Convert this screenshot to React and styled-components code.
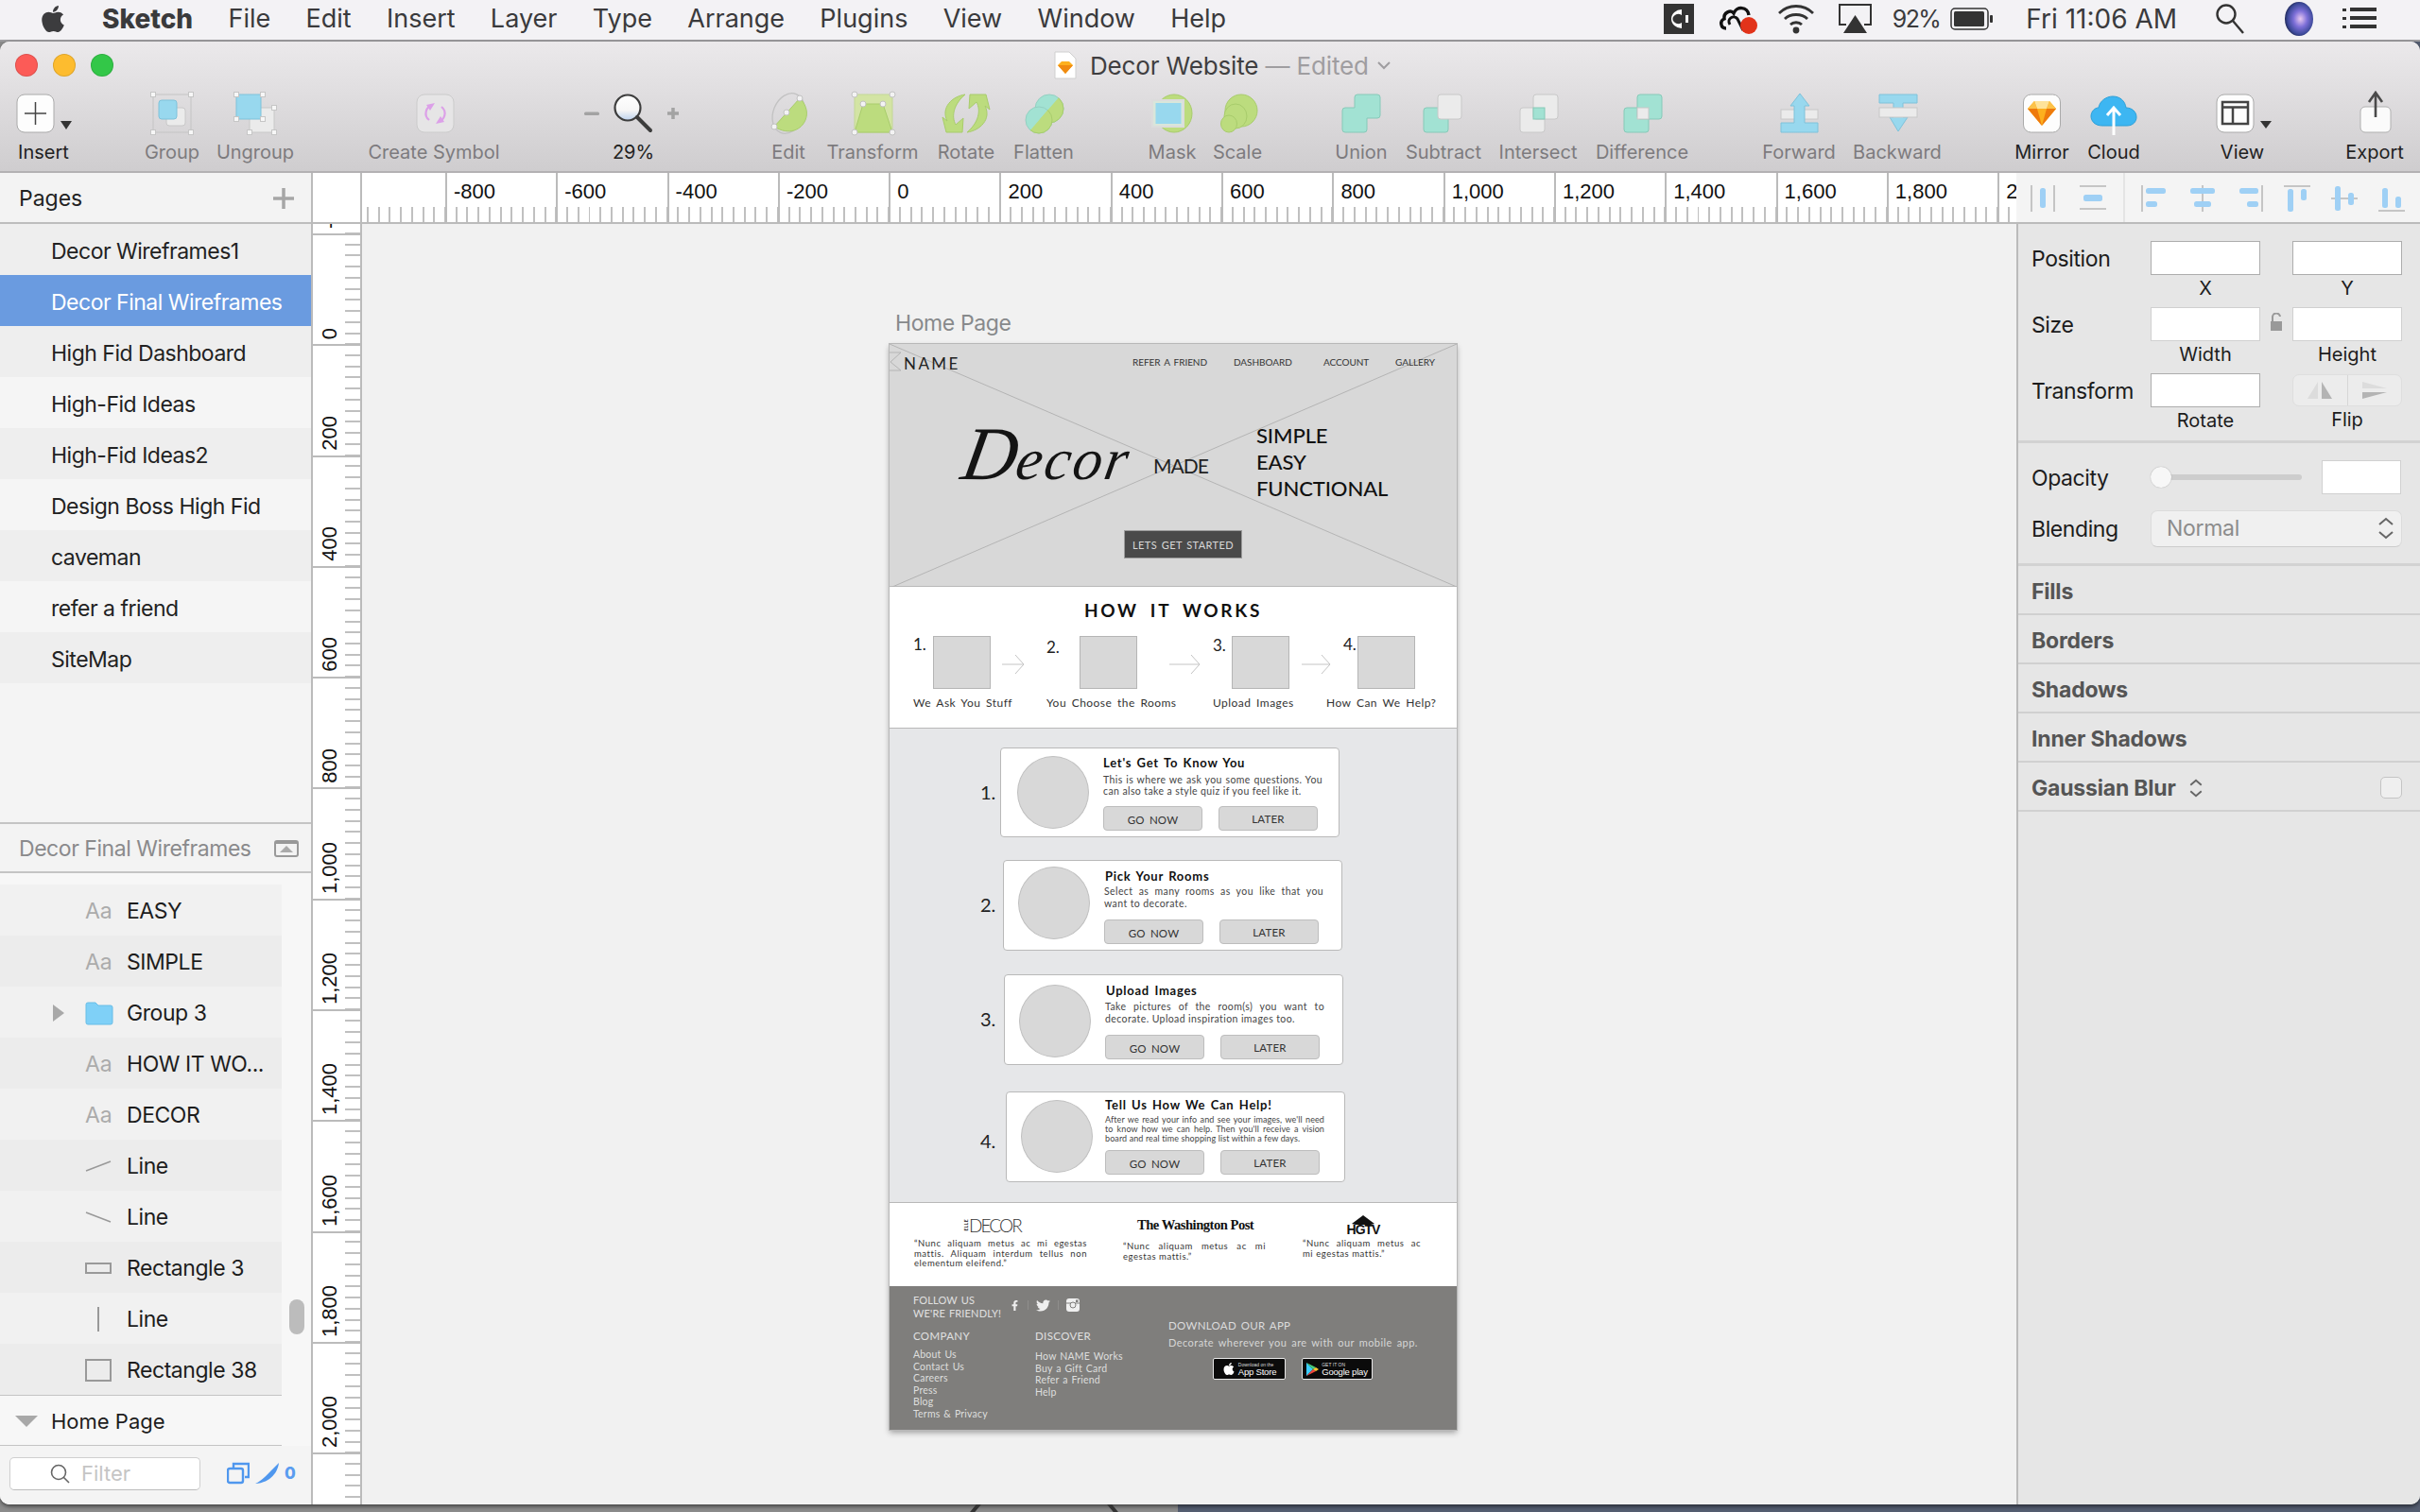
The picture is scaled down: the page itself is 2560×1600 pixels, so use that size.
import React from 'react';
import styled, { createGlobalStyle } from 'styled-components';
import { FaApple, FaFacebookF, FaTwitter } from 'react-icons/fa';

const UI = `"Inter", "Liberation Sans", sans-serif`;
const WIRE = `"Lato", "Noto Sans", sans-serif`;

const Global = createGlobalStyle`
  html, body { margin: 0; width: 2560px; height: 1600px; overflow: hidden; background: #8c8c8c; }
  #root { width: 2560px; height: 1600px; }
  * { box-sizing: border-box; }
`;

const Screen = styled.div`
  width: 2560px; height: 1600px; display: flex; flex-direction: column;
  font-family: ${UI}; background: linear-gradient(90deg, #8b8b8b 0, #8b8b8b 1246px, #545d70 1246px, #545d70 100%);
`;

/* ---------- menu bar ---------- */
const MenuBar = styled.header`
  height: 44px; flex: none; display: flex; align-items: center; background: #f3f2f5;
  border-bottom: 2px solid #9d9c9f; padding: 0 46px 2px 42px; color: #3a3a3c;
`;
const AppleMark = styled(FaApple)` width: 28px; height: 32px; color: #3c3c3e; margin-right: 38px; `;
const MenuItems = styled.nav` display: flex; gap: 37.3px; font-size: 27px; `;
const MenuItem = styled.span` font-weight: ${p => (p.$bold ? 800 : 400)}; font-size: ${p => (p.$bold ? 28 : 27)}px; `;
const Status = styled.div` margin-left: auto; display: flex; align-items: center; `;
const StatusText = styled.span` font-size: ${p => p.$fs || 26}px; color: #3a3a3c; margin-left: ${p => p.$ml || 0}px; letter-spacing: ${p => p.$ls || 0}px; white-space: nowrap; `;
const StatusIcon = styled.svg` margin-left: ${p => p.$ml || 0}px; display: block; flex: none; `;

/* ---------- window ---------- */
const Window = styled.main`
  height: 1548px; flex: none; display: flex; flex-direction: column;
  border-radius: 10px; overflow: hidden; background: #f1f1f1;
  box-shadow: 0 2px 4px rgba(0,0,0,.55);
`;
const Chrome = styled.div`
  height: 139px; flex: none; display: flex; flex-direction: column;
  background: linear-gradient(#ebe9eb, #cfcdcf); border-bottom: 2px solid #b3b1b3;
`;
const TitleBar = styled.div` height: 52px; flex: none; display: flex; align-items: center; padding: 0 0 2px 16px; `;
const Lights = styled.div` display: flex; gap: 16px; width: 1099px; `;
const Light = styled.span` width: 24px; height: 24px; border-radius: 50%; background: ${p => p.$c}; box-shadow: inset 0 0 0 1px rgba(0,0,0,.12); `;
const DocIcon = styled.svg` margin-right: 14px; flex: none; `;
const DocTitle = styled.span` font-size: 26px; color: #3f3e40; letter-spacing: -0.15px; `;
const DocMuted = styled.span` color: #9f9da0; `;
const TitleChevron = styled.svg` margin-left: 8px; `;

const Tools = styled.div` display: flex; flex: 1; align-items: flex-start; `;
const Tool = styled.div`
  flex: none; width: ${p => p.$w}px; margin-left: ${p => p.$ml || 0}px;
  display: flex; flex-direction: column; align-items: center;
`;
const ToolIcon = styled.svg` flex: none; width: 130px; height: 48px; display: block; margin-top: 0; `;
const ToolLabel = styled.span`
  font-size: 20px; line-height: 24px; margin-top: 5px; white-space: nowrap;
  color: ${p => (p.$on ? '#222' : '#7d7b7e')};
`;

const Body = styled.div`
  flex: 1; min-height: 0; display: grid;
  grid-template-columns: 329px 54px 1750px 427px;
  grid-template-rows: 54px 1fr;
`;

/* ---------- left pane ---------- */
const LeftPane = styled.aside` grid-row: 1 / 3; display: flex; flex-direction: column; background: #f4f4f4; min-height: 0; `;
const Pages = styled.section` height: 687px; flex: none; display: flex; flex-direction: column; `;
const PagesHead = styled.div`
  height: 54px; flex: none; display: flex; align-items: center; justify-content: space-between;
  padding: 2px 17px 0 20px; font-size: 23px; color: #222; border-bottom: 2px solid #bdbdbd; background: #f3f3f3;
`;
const PlusIcon = styled.svg` display: block; `;
const PageRow = styled.div`
  height: 54px; flex: none; display: flex; align-items: center; padding: 4px 0 0 54px; font-size: 23px; letter-spacing: -0.5px;
  color: ${p => (p.$sel ? '#fff' : '#222')};
  background: ${p => (p.$sel ? '#6a9be0' : p.$alt ? '#eeeeee' : '#f5f5f5')};
`;
const LayersHead = styled.div`
  height: 54px; flex: none; display: flex; align-items: center; justify-content: space-between;
  padding: 2px 13px 0 20px; font-size: 23px; color: #8a8a8c; letter-spacing: -0.45px;
  border-top: 2px solid #c4c4c4; border-bottom: 2px solid #c4c4c4; background: #f3f3f3;
`;
const Layers = styled.div` height: 606px; flex: none; display: flex; background: #f7f7f7; `;
const LayerCol = styled.div` width: 298px; flex: none; padding-top: 12px; display: flex; flex-direction: column; `;
const LayerRow = styled.div`
  height: 54px; flex: none; display: grid; grid-template-columns: 56px 34px 44px 1fr; align-items: center; padding-top: 2px;
  font-size: 23px; color: #1d1d1d; letter-spacing: -0.45px; white-space: nowrap;
  background: ${p => (p.$alt ? '#ececec' : '#f1f1f1')};
`;
const Aa = styled.span` color: #ababab; font-size: 23px; letter-spacing: 0; `;
const HomeRow = styled.div`
  height: 54px; flex: none; display: flex; align-items: center; padding: 2px 0 0 16px; gap: 14px; font-size: 22px;
  color: #1d1d1d; border-top: 1px solid #c4c4c4; border-bottom: 1px solid #c4c4c4; background: #f7f7f7;
`;
const ScrollThumb = styled.div` width: 16px; height: 37px; border-radius: 8px; background: #bcbcbc; margin: 451px 0 0 8px; `;
const FilterBar = styled.div` flex: 1; display: flex; align-items: center; padding: 0 0 4px 10px; background: #f4f4f4; `;
const FilterBox = styled.div`
  width: 202px; height: 35px; border: 1px solid #cfcfcf; border-bottom-color: #bdbdbd; border-radius: 5px; background: #fff;
  display: flex; align-items: center; padding-left: 42px; gap: 12px; font-size: 22px; color: #c5c5c5;
`;
const CountIcon = styled.svg` margin-left: 28px; flex: none; `;
const PenIcon = styled.svg` margin-left: 6px; flex: none; `;
const Count = styled.span` font-size: 17px; font-weight: 800; color: #5a9cf0; margin-left: 5px; `;

/* ---------- rulers ---------- */
const Corner = styled.div` background: #fff; border-left: 2px solid #bbb; border-right: 2px solid #bbb; border-bottom: 2px solid #bbb; `;
const HRuler = styled.div`
  display: flex; overflow: hidden; border-bottom: 2px solid #bbb;
  background: repeating-linear-gradient(90deg, transparent 0, transparent 4.9px, #c0c0c0 4.9px, #c0c0c0 6.9px, transparent 6.9px, transparent 11.73px) left bottom / 100% 16px no-repeat, #fff;
`;
const HSpacer = styled.div` width: 88px; flex: none; `;
const HCell = styled.div`
  width: 117.3px; flex: none; border-left: 2px solid #bbb; padding-left: 7px;
  font: 22px/40px "Liberation Sans", sans-serif; color: #111;
`;
const VRuler = styled.div`
  display: flex; flex-direction: column; overflow: hidden; border-left: 2px solid #bbb; border-right: 2px solid #bbb;
  background: repeating-linear-gradient(180deg, transparent 0, transparent 9px, #c0c0c0 9px, #c0c0c0 11px, transparent 11px, transparent 11.73px) right top / 16px 100% no-repeat, #fff;
`;
const VCell = styled.div`
  height: ${p => p.$h}px; flex: none; border-bottom: 2px solid #bbb; display: flex; align-items: flex-end;
  justify-content: flex-start; padding: 0 0 5px 5px; overflow: hidden;
`;
const VLabel = styled.span`
  writing-mode: vertical-rl; transform: rotate(180deg); font: 22px/26px "Liberation Sans", sans-serif; color: #111; white-space: nowrap; flex: none;
`;

/* ---------- align bar + inspector ---------- */
const AlignBar = styled.div`
  display: flex; align-items: center; padding-left: 8px; background: #f4f4f4; border-bottom: 2px solid #bbb; position: relative;
`;
const AlignIcon = styled.svg` width: 40px; height: 40px; flex: none; margin-left: ${p => p.$ml || 0}px; `;
const AlignDivider = styled.span` position: absolute; left: 113px; top: 0; bottom: 0; width: 2px; background: #e4e4e4; `;
const Inspector = styled.aside` background: #e6e6e6; border-left: 2px solid #bbb; display: flex; flex-direction: column; `;
const FormBlock = styled.div` padding: 18px 19px 0 14px; height: 232px; flex: none; border-bottom: 3px solid #d2d2d2; `;
const FormRow = styled.div` display: grid; grid-template-columns: 126px 116px 34px 116px; height: 70px; `;
const RowLabel = styled.span` font-size: 23px; line-height: 38px; color: #1c1c1c; letter-spacing: -0.4px; `;
const Field = styled.div` display: flex; flex-direction: column; align-items: center; font-size: 20px; color: #1c1c1c; line-height: 28px; `;
const InputBox = styled.div`
  width: ${p => p.$w || 116}px; height: 36px; flex: none; background: #fff;
  border: 1px solid ${p => (p.$soft ? '#d0d0d0' : '#adadad')}; border-bottom-width: 1px;
`;
const LockCell = styled.div` display: flex; justify-content: center; padding-top: 6px; `;
const Flip = styled.div` width: 116px; height: 34px; margin-top: 1px; display: flex; border-radius: 7px; background: #ececec; border: 1px solid #dedede; `;
const FlipSide = styled.div` flex: 1; display: flex; align-items: center; justify-content: center; border-left: ${p => (p.$div ? '1px solid #d6d6d6' : 'none')}; `;
const BlendBlock = styled.div` padding: 18px 19px 0 14px; height: 130px; flex: none; border-bottom: 3px solid #d2d2d2; `;
const BlendRow = styled.div` display: flex; align-items: center; height: 36px; margin-bottom: ${p => p.$mb || 0}px; `;
const BlendLabel = styled.span` width: 126px; flex: none; font-size: 23px; color: #1c1c1c; letter-spacing: -0.4px; padding-top: 2px; `;
const Slider = styled.div` width: 160px; height: 6px; border-radius: 3px; background: #cdcdcd; position: relative; flex: none; margin-right: 21px; `;
const Thumb = styled.span` position: absolute; left: 0; top: -8px; width: 22px; height: 22px; border-radius: 50%; background: #f7f7f7; box-shadow: 0 0 1px rgba(0,0,0,.4); `;
const Select = styled.div`
  width: 266px; height: 39px; border-radius: 7px; background: #f0f0f0; border: 1px solid #dcdcdc; border-bottom-color: #ccc;
  display: flex; align-items: center; justify-content: space-between; padding: 0 5px 0 16px; font-size: 23px; color: #8c8c8c; letter-spacing: -0.3px;
`;
const SectionRow = styled.div`
  height: 52px; flex: none; display: flex; align-items: center; padding: 3px 19px 0 14px;
  font-size: 23px; font-weight: 700; color: #555; border-bottom: 2px solid #d0d0d0; letter-spacing: -0.2px;
`;
const Check = styled.span` margin-left: auto; width: 23px; height: 23px; border: 1px solid #c4c4c4; border-radius: 5px; background: #efefef; `;
const SmallChevrons = styled.svg` margin-left: 12px; `;

/* ---------- canvas + artboard ---------- */
const Canvas = styled.div` background: #f1f1f1; padding: 91px 0 0 558px; overflow: hidden; `;
const ArtLabel = styled.div` font-size: 23px; line-height: 28px; color: #87898b; margin: 0 0 8px 6px; letter-spacing: -0.4px; `;
const Artboard = styled.article`
  width: 600px; height: 1149px; display: flex; flex-direction: column; background: #fff;
  box-shadow: 0 0 0 1px #b8b8b8, 0 3px 6px rgba(0,0,0,.35); font-family: ${WIRE}; color: #111;
`;
const Hero = styled.section` height: 257px; flex: none; background: #d8d8d8; position: relative; border-bottom: 1px solid #b8b8b8; `;
const HeroX = styled.svg` position: absolute; inset: 0; width: 600px; height: 257px; `;
const HeroIn = styled.div` position: relative; display: flex; flex-direction: column; `;
const Nav = styled.div`
  display: grid; grid-template-columns: 242px 107px 95px 76px auto; align-items: center;
  padding: 9px 0 0 15px; height: 32px; font-size: 10px; color: #333; letter-spacing: -.05px; word-spacing: 1.5px;
`;
const NavLink = styled.span` margin-top: -4px; white-space: nowrap; `;
const Brand = styled.span` font-size: 17px; letter-spacing: 2.4px; color: #222; `;
const HeroMid = styled.div` display: grid; grid-template-columns: 207px 109px auto; padding: 51px 0 0 72px; height: 165px; `;
const Decor = styled.div`
  font: italic 400 80px/84px "Liberation Serif", serif; color: #141414; margin: -9px 0 0 -8px;
  transform: skewX(-10deg); transform-origin: left bottom; white-space: nowrap;
`;
const DecorRest = styled.span` font-size: 62px; letter-spacing: 2.5px; `;
const Made = styled.div` font-size: 21px; line-height: 28px; padding-top: 32px; letter-spacing: -1px; color: #222; `;
const Words = styled.div` font-size: 22px; line-height: 28px; font-weight: 500; letter-spacing: -.1px; color: #111; `;
const Started = styled.div`
  width: 125px; height: 30px; margin: 0 0 0 248px; background: #4a4a4a; border: 1px solid #9b9b9b; white-space: nowrap;
  display: flex; align-items: center; justify-content: center; color: #d8d8d8; font-size: 11px; letter-spacing: .4px; word-spacing: 1.5px;
`;
const How = styled.section` height: 149px; flex: none; padding-top: 14px; `;
const HowTitle = styled.h2`
  margin: 0; font: 700 19px/22px ${WIRE}; letter-spacing: 2.7px; word-spacing: 5px; text-align: center;
`;
const StepGrid = styled.div` display: grid; grid-template-columns: 141px 176px 120px auto; padding: 16px 0 0 25px; `;
const Step = styled.div` display: flex; flex-direction: column; `;
const StepTop = styled.div` display: flex; align-items: flex-start; height: 56px; `;
const StepNum = styled.span`
  width: ${p => p.$w}px; margin-left: ${p => p.$ml || 0}px; flex: none; padding-top: ${p => p.$pt}px;
  font-size: 17px; line-height: 18px; color: #222;
`;
const StepBox = styled.div` width: 61px; height: 56px; flex: none; background: #d8d8d8; border: 1px solid #b5b5b5; `;
const StepArrow = styled.svg` margin: 18px 0 0 ${p => p.$ml}px; flex: none; `;
const StepLabel = styled.span` margin-top: 8px; font-size: 12px; line-height: 14px; letter-spacing: .45px; word-spacing: 2.2px; color: #333; white-space: nowrap; `;

const Steps = styled.section` height: 503px; flex: none; background: #e6e7e9; border-top: 1px solid #b8b8b8; border-bottom: 1px solid #b8b8b8; padding-top: 20px; display: flex; flex-direction: column; `;
const CardRow = styled.div` display: flex; align-items: center; padding-left: 96px; margin-top: ${p => p.$mt || 0}px; `;
const CardNum = styled.span`
  width: ${p => p.$w}px; flex: none; font-size: 20px; line-height: 24px; color: #222; padding: ${p => p.$pt || 0}px 0 2px;
`;
const Card = styled.div`
  width: 359px; height: ${p => p.$h}px; flex: none; background: #fff; border: 1px solid #b9b9b9; border-radius: 4px;
  display: flex; align-items: flex-start;
`;
const Circle = styled.div`
  width: 76px; height: 77px; flex: none; border-radius: 50%; background: #d8d8d8; border: 1px solid #c0c0c0;
  margin: ${p => p.$top}px 0 0 ${p => p.$left}px;
`;
const CardBody = styled.div` margin-left: ${p => p.$left}px; padding-top: ${p => p.$pt}px; width: 234px; flex: none; display: flex; flex-direction: column; `;
const CardTitle = styled.h3` margin: 0 0 0 ${p => p.$ml || 0}px; font: 700 13px/16px ${WIRE}; letter-spacing: .75px; word-spacing: 1.5px; color: #111; `;
const CardText = styled.p`
  margin: ${p => p.$mt}px 0 0 0; font-size: ${p => p.$fs}px; line-height: ${p => p.$lh}px; color: #444; letter-spacing: ${p => p.$ls}px; text-align: justify; width: 232px;
`;
const CardBtns = styled.div` display: flex; gap: 17px; margin-top: ${p => p.$mt}px; `;
const CardBtn = styled.span`
  width: 105px; height: 26px; border: 1px solid #bdbdbd; border-radius: 4px; background: #d8d8d8; display: flex; align-items: center; justify-content: center;
  padding-top: ${p => (p.$low ? 2 : 0)}px; font-size: 11.5px; letter-spacing: .2px; word-spacing: 2px; color: #333;
`;

const Press = styled.section` height: 88px; flex: none; display: grid; grid-template-columns: 221px 190px auto; padding: 11px 0 0 26px; `;
const Quote = styled.div` display: flex; flex-direction: column; `;
const LogoSlot = styled.div` height: 24px; display: flex; align-items: center; margin-left: ${p => p.$ml}px; `;
const Elle = styled.span` font-size: 5px; font-weight: 900; writing-mode: vertical-rl; transform: rotate(180deg); letter-spacing: .4px; color: #444; `;
const ElleDecor = styled.span` font-weight: 300; font-size: 19px; letter-spacing: -1.9px; color: #333; `;
const WaPo = styled.span` font: 700 14.6px "Liberation Serif", serif; letter-spacing: -.5px; color: #111; white-space: nowrap; `;
const HgtvWrap = styled.div` display: flex; flex-direction: column; align-items: center; width: 36px; `;
const Hgtv = styled.span` font: 700 14px/11px "Liberation Sans", sans-serif; letter-spacing: -1px; color: #111; `;
const QuoteText = styled.p`
  margin: ${p => p.$mt}px 0 0 0; width: ${p => p.$w}px; font-size: 9.5px; line-height: ${p => p.$lh}px; letter-spacing: .55px; color: #333; text-align: justify;
`;

const Footer = styled.footer` flex: 1; background: #7f7e7c; display: grid; grid-template-columns: 270px auto; padding: 8px 0 0 25px; color: #dcdcdc; `;
const Follow = styled.div` display: flex; `;
const FollowText = styled.div` width: 102px; flex: none; font-size: 11px; line-height: 14px; letter-spacing: .15px; word-spacing: 1px; white-space: nowrap; color: #e0e0e0; `;
const Socials = styled.div` display: flex; align-items: center; height: 14px; margin-top: 5px; color: #efefef; gap: 8px; `;
const SocialSep = styled.span` width: 1px; height: 10px; background: #8f8e8c; `;
const LinkCols = styled.div` display: grid; grid-template-columns: 129px auto; margin-top: 10px; `;
const ColHead = styled.div` font-size: 11.5px; line-height: 14px; letter-spacing: .35px; color: #e0e0e0; `;
const LinkList = styled.div` margin-top: ${p => p.$mt}px; display: flex; flex-direction: column; font-size: 10.5px; line-height: 12.6px; letter-spacing: .2px; word-spacing: 1px; color: #dedede; white-space: nowrap; `;
const AppCol = styled.div` padding-top: 27px; `;
const AppHead = styled.div` font-size: 11.5px; line-height: 14px; letter-spacing: .3px; word-spacing: 1.5px; color: #dcdcdc; `;
const AppText = styled.div` font-size: 11px; line-height: 14px; margin-top: 4px; letter-spacing: .45px; word-spacing: 1.6px; color: #d6d6d6; white-space: nowrap; `;
const Badges = styled.div` display: flex; gap: 17px; margin: 9px 0 0 47px; `;
const Badge = styled.div`
  width: ${p => p.$w}px; height: 23px; background: #0b0b0b; border: 1px solid #e8e8e8; border-radius: 2px; display: flex; align-items: center; justify-content: center; gap: 3px; color: #fff;
`;
const BadgeText = styled.div` display: flex; flex-direction: column; font: 5px/6px "Liberation Sans", sans-serif; color: #ddd; white-space: nowrap; `;
const BadgeBig = styled.span` font-size: 9.5px; line-height: 9px; color: #fff; letter-spacing: -.2px; `;
const AppleBadge = styled(FaApple)` width: 14px; height: 15px; `;

const Strip = styled.div` flex: 1; overflow: hidden; `;
const StripArt = styled.svg` display: block; margin-left: 1000px; `;

/* ---------- icons ---------- */
const GR = '#bcdc7e', GRS = '#a8cc6c', BL = '#98d8ee', BLS = '#7fc2da', TL = '#a2e2d3', TLS = '#86c9b8', WH = '#ebebeb', WHS = '#c8c8c8';
const Sq = ({ x, y }) => <rect x={x - 2.5} y={y - 2.5} width="5" height="5" fill="#f7f7f7" stroke="#c6c6c6" />;
const Dot = ({ x, y }) => <circle cx={x} cy={y} r="3" fill="#f3f3f3" stroke="#c2c2c2" />;
const Gem = () => (
  <g>
    <polygon points="-8,11 8,11 15,19 0,37 -15,19" fill="#fdb01e" />
    <polygon points="-8,11 8,11 5,19 -5,19" fill="#fee39a" />
    <polygon points="-8,11 -15,19 -5,19" fill="#fcc24a" />
    <polygon points="8,11 15,19 5,19" fill="#fcc24a" />
    <polygon points="-15,19 -5,19 0,37" fill="#ee7a0c" />
    <polygon points="15,19 5,19 0,37" fill="#ee7a0c" />
  </g>
);
const ROT = 'M-1 4C-15 6 -27 18 -20 32L-25 28L-21 44L-4 44L-3 29L-11 36C-16 27 -13 14 -1 4Z';

const icons = {
  insert: <>
    <rect x="-28" y="4" width="39" height="40" rx="8" fill="#fdfdfd" stroke="#aaa" />
    <path d="M-8.5 12V36M-20 24H3" stroke="#444" strokeWidth="1.5" />
    <polygon points="18,32 30,32 24,41" fill="#333" />
  </>,
  group: <>
    <rect x="-20" y="4" width="40" height="40" fill="none" stroke="#c4c4c4" />
    <rect x="-6" y="18" width="20" height="19" rx="3" fill={WH} stroke={WHS} />
    <rect x="-14" y="10" width="19" height="20" rx="3" fill={BL} stroke={BLS} />
    <Sq x={-20} y={4} /><Sq x={20} y={4} /><Sq x={-20} y={44} /><Sq x={20} y={44} />
  </>,
  ungroup: <>
    <rect x="-6" y="18" width="26" height="26" fill={WH} stroke={WHS} />
    <rect x="-20" y="4" width="26" height="26" fill={BL} stroke={BLS} />
    <Sq x={-20} y={4} /><Sq x={8} y={4} /><Sq x={-20} y={30} /><Sq x={8} y={30} />
    <Sq x={20} y={18} /><Sq x={-6} y={44} /><Sq x={20} y={44} />
  </>,
  symbol: <>
    <rect x="-18" y="4" width="39" height="40" rx="8" fill="#e6e5e6" stroke="#cbcbcb" />
    <path d="M-5 31A9 9 0 0 1 -1 15" fill="none" stroke="#dca0e8" strokeWidth="2.2" />
    <path d="M8 17A9 9 0 0 1 4 33" fill="none" stroke="#dca0e8" strokeWidth="2.2" />
    <polygon points="-8,15 1,13 -4,21" fill="#dca0e8" />
    <polygon points="11,33 2,35 7,27" fill="#dca0e8" />
  </>,
  zoom: <>
    <rect x="-52" y="22.5" width="16" height="3.5" rx="1.5" fill="#a3a3a3" />
    <path d="M36 24H48M42 18V30" stroke="#a3a3a3" strokeWidth="3.5" />
    <defs><linearGradient id="lens" x1="0" y1="0" x2="0" y2="1"><stop offset="0" stopColor="#fff" /><stop offset=".6" stopColor="#f6f6f6" /><stop offset="1" stopColor="#bcd1ee" /></linearGradient></defs>
    <circle cx="-6" cy="18" r="13.5" fill="url(#lens)" stroke="#3d3d3d" strokeWidth="2.2" />
    <path d="M4 28L18 42" stroke="#3d3d3d" strokeWidth="4" strokeLinecap="round" />
  </>,
  edit: <>
    <ellipse cx="0" cy="24" rx="16" ry="22" transform="rotate(22 0 24)" fill="none" stroke="#c2c2c2" strokeWidth="1.3" />
    <path d="M-15 38L12 8C17 12 22 22 18 31C14 41 1 48 -15 38Z" fill={GR} stroke={GRS} />
    <Dot x={-15} y={38} /><Dot x={-2} y={23} /><Dot x={12} y={8} />
  </>,
  transform: <>
    <rect x="-19" y="4" width="40" height="40" fill="#d3e4a4" stroke="#c3d796" />
    <polygon points="-10,14 11,14 21,44 -19,44" fill={GR} stroke={GRS} />
    <Dot x={-19} y={4} /><Dot x={21} y={4} /><Dot x={-19} y={44} /><Dot x={21} y={44} /><Dot x={-10} y={14} /><Dot x={11} y={14} />
  </>,
  rotate: <>
    <path d={ROT} fill={GR} stroke={GRS} />
    <path d={ROT} transform="rotate(180 0 24)" fill={GR} stroke={GRS} />
  </>,
  flatten: <>
    <defs><clipPath id="flatClip"><polygon points="-30,52 -16,44 17,6 30,6 30,52" /></clipPath></defs>
    <circle cx="6" cy="19" r="15" fill={TL} stroke="#94d0c2" />
    <circle cx="-5" cy="31" r="14" fill={TL} stroke="#94d0c2" />
    <g clipPath="url(#flatClip)">
      <circle cx="6" cy="19" r="15" fill={GR} stroke={GRS} />
      <circle cx="-5" cy="31" r="14" fill={GR} stroke={GRS} />
    </g>
  </>,
  mask: <>
    <ellipse cx="2" cy="24" rx="19" ry="20" fill={GR} stroke={GRS} />
    <rect x="-21" y="10" width="33" height="28" fill="#d9e6da" stroke="#dcdcdc" strokeWidth="2" />
    <rect x="-17.5" y="13" width="27" height="22" fill={BL} />
  </>,
  scale: <>
    <circle cx="4" cy="21" r="17" fill={GR} stroke={GRS} />
    <ellipse cx="-2" cy="27" rx="12" ry="13" fill={GR} stroke={GRS} />
    <ellipse cx="-9" cy="35" rx="8.5" ry="9" fill={GR} stroke={GRS} />
  </>,
  union: <path d="M-4 4H17Q20 4 20 7V26Q20 29 17 29H6V41Q6 44 3 44H-17Q-20 44 -20 41V21Q-20 18 -17 18H-7V7Q-7 4 -4 4Z" fill={TL} stroke={TLS} />,
  subtract: <>
    <rect x="-21" y="18" width="26" height="26" rx="3" fill={TL} stroke={TLS} />
    <rect x="-6" y="4" width="25" height="26" rx="3" fill={WH} stroke={WHS} />
  </>,
  intersect: <>
    <rect x="-19" y="18" width="26" height="26" rx="3" fill={WH} stroke={WHS} />
    <rect x="-5" y="4" width="26" height="26" rx="3" fill={WH} stroke={WHS} />
    <rect x="-5" y="18" width="12" height="12" fill={TL} stroke={TLS} />
  </>,
  difference: <>
    <rect x="-19" y="18" width="26" height="26" rx="3" fill={TL} stroke={TLS} />
    <rect x="-5" y="4" width="26" height="26" rx="3" fill={TL} stroke={TLS} />
    <rect x="-5" y="18" width="12" height="12" fill={WH} stroke={WHS} />
  </>,
  forward: <>
    <rect x="-19" y="20" width="39" height="10" fill={WH} stroke={WHS} />
    <polygon points="1,3 11,16 6,16 6,34 20,34 20,44 -19,44 -19,34 -5,34 -5,16 -9,16" fill={BL} stroke={BLS} />
  </>,
  backward: <>
    <polygon points="-19,4 21,4 21,13 6,13 6,28 11,28 1,43 -8,28 -4,28 -4,13 -19,13" fill={BL} stroke={BLS} />
    <rect x="-19" y="18" width="40" height="10" fill={WH} stroke={WHS} />
  </>,
  mirror: <>
    <rect x="-19.5" y="4" width="39" height="40" rx="8" fill="#fdfdfd" stroke="#aaa" />
    <Gem />
  </>,
  cloud: <>
    <path d="M-12 37C-20 37 -24 32 -24 27C-24 22 -20 18 -16 18C-15 11 -8 6 -1 6C7 6 12 11 13 18C19 18 24 22 24 28C24 33 20 37 14 37Z" fill="#3db6f2" stroke="#2b9fd8" />
    <path d="M0 47V19M-7 26L0 18L7 26" fill="none" stroke="#fff" strokeWidth="3" />
  </>,
  view: <>
    <rect x="-27" y="4" width="39" height="40" rx="8" fill="#fdfdfd" stroke="#aaa" />
    <rect x="-21" y="12" width="27" height="23" fill="none" stroke="#444" strokeWidth="2.5" />
    <path d="M-21 17.5H6M-10 17.5V35" stroke="#444" strokeWidth="2.5" />
    <polygon points="19,32 31,32 25,40" fill="#333" />
  </>,
  export: <>
    <rect x="-15" y="17" width="32" height="27" rx="5" fill="#fbfbfb" stroke="#b0b0b0" />
    <path d="M1 28V3M-6 12L1 2L8 12" fill="none" stroke="#4a4a4a" strokeWidth="2.6" />
  </>,
};

const tools = [
  ['insert', 'Insert', 92, 0, 1], ['group', 'Group', 80, 50], ['ungroup', 'Ungroup', 96, 0],
  ['symbol', 'Create Symbol', 160, 61], ['zoom', '29%', 140, 61, 1],
  ['edit', 'Edit', 60, 64], ['transform', 'Transform', 118, 0], ['rotate', 'Rotate', 80, 0], ['flatten', 'Flatten', 84, 0],
  ['mask', 'Mask', 66, 61], ['scale', 'Scale', 72, 0],
  ['union', 'Union', 76, 57], ['subtract', 'Subtract', 98, 0], ['intersect', 'Intersect', 102, 0], ['difference', 'Difference', 118, 0],
  ['forward', 'Forward', 94, 60], ['backward', 'Backward', 114, 0],
  ['mirror', 'Mirror', 76, 58, 1], ['cloud', 'Cloud', 76, 0, 1], ['view', 'View', 80, 58, 1], ['export', 'Export', 80, 60, 1],
];

const B = '#9fd0f5', G = '#b6b6b6';
const Pill = ({ x, y, w, h }) => <rect x={x} y={y} width={w} height={h} rx="2.5" fill={B} />;
const aligns = [
  [0, <><path d="M8 7V35M32 7V35" stroke={G} strokeWidth="1.5" /><Pill x={17} y={10} w={6} h={21} /></>],
  [13, <><path d="M6 8H34M6 32H34" stroke={G} strokeWidth="1.5" /><Pill x={10} y={17} w={20} h={7} /></>],
  [25, <><path d="M7 7V35" stroke={G} strokeWidth="1.5" /><Pill x={11} y={10} w={21} h={6} /><Pill x={11} y={24} w={12} h={6} /></>],
  [11, <><path d="M20 7V35" stroke={G} strokeWidth="1.5" /><Pill x={7} y={10} w={26} h={6} /><Pill x={11} y={24} w={18} h={6} /></>],
  [12, <><path d="M31 7V35" stroke={G} strokeWidth="1.5" /><Pill x={7} y={10} w={20} h={6} /><Pill x={15} y={24} w={12} h={6} /></>],
  [8, <><path d="M6 8H34" stroke={G} strokeWidth="1.5" /><Pill x={10} y={11} w={6} h={24} /><Pill x={24} y={11} w={6} h={12} /></>],
  [10, <><path d="M6 21H34" stroke={G} strokeWidth="1.5" /><Pill x={10} y={8} w={6} h={26} /><Pill x={24} y={15} w={6} h={13} /></>],
  [10, <><path d="M6 34H34" stroke={G} strokeWidth="1.5" /><Pill x={10} y={10} w={6} h={21} /><Pill x={24} y={19} w={6} h={12} /></>],
];

const Chevrons = ({ w = 22, h = 26 }) => (
  <svg width={w} height={h} viewBox="0 0 22 26" fill="none" stroke="#666" strokeWidth="2"><path d="M4 9L11 3L18 9M4 17L11 23L18 17" /></svg>
);

const pages = ['Decor Wireframes1', 'Decor Final Wireframes', 'High Fid Dashboard', 'High-Fid Ideas', 'High-Fid Ideas2', 'Design Boss High Fid', 'caveman', 'refer a friend', 'SiteMap'];

const LI = {
  aa: <Aa>Aa</Aa>,
  folder: <svg width="30" height="26" viewBox="0 0 30 26"><path d="M1 4Q1 2 3 2H11L14 5H27Q29 5 29 7V23Q29 25 27 25H3Q1 25 1 23Z" fill="#7fd0f7" stroke="#69bde6" /></svg>,
  up: <svg width="28" height="14" viewBox="0 0 28 14"><path d="M1 12L27 2" stroke="#999" strokeWidth="1.5" /></svg>,
  down: <svg width="28" height="14" viewBox="0 0 28 14"><path d="M1 2L27 12" stroke="#999" strokeWidth="1.5" /></svg>,
  rect: <svg width="28" height="14" viewBox="0 0 28 14"><rect x="1" y="2" width="26" height="10" fill="none" stroke="#999" strokeWidth="2" /></svg>,
  vline: <svg width="28" height="26" viewBox="0 0 28 26"><path d="M14 0V26" stroke="#999" strokeWidth="2" /></svg>,
  rect2: <svg width="28" height="24" viewBox="0 0 28 24"><rect x="1" y="1" width="26" height="22" fill="none" stroke="#999" strokeWidth="2" /></svg>,
};
const layers = [
  ['aa', 'EASY'], ['aa', 'SIMPLE'], ['folder', 'Group 3', 1], ['aa', 'HOW IT WO...'], ['aa', 'DECOR'],
  ['up', 'Line'], ['down', 'Line'], ['rect', 'Rectangle 3'], ['vline', 'Line'], ['rect2', 'Rectangle 38'],
];

const hLabels = ['-800', '-600', '-400', '-200', '0', '200', '400', '600', '800', '1,000', '1,200', '1,400', '1,600', '1,800', '2,000'];
const vLabels = ['0', '200', '400', '600', '800', '1,000', '1,200', '1,400', '1,600', '1,800', '2,000'];

const stepData = [
  { n: '1.', num: { w: 21, pt: 0 }, gap: 12, aw: 24, label: 'We Ask You Stuff' },
  { n: '2.', num: { w: 35, pt: 3 }, gap: 34, aw: 33, label: 'You Choose the Rooms' },
  { n: '3.', num: { w: 20, pt: 1 }, gap: 13, aw: 31, label: 'Upload Images' },
  { n: '4.', num: { w: 15, pt: 0, ml: 18 }, label: 'How Can We Help?' },
];

const cards = [
  { n: '1.', w: 21, mt: 0, np: 0, h: 95, cl: 17, ct: 8, bl: 15, pt: 7, tml: 0, ls: .4,
    title: "Let's Get To Know You", text: 'This is where we ask you some questions. You can also take a style quiz if you feel like it.', fs: 10.5, lh: 12, tm: 4, bm: 10 },
  { n: '2.', w: 24, mt: 24, np: 0, h: 96, cl: 15, ct: 6, bl: 15, pt: 8, tml: 1, ls: .4,
    title: 'Pick Your Rooms', text: 'Select as many rooms as you like that you want to decorate.', fs: 10.5, lh: 13, tm: 2, bm: 10 },
  { n: '3.', w: 25, mt: 25, np: 0, h: 96, cl: 15, ct: 10, bl: 15, pt: 8, tml: 1, ls: .4,
    title: 'Upload Images', text: 'Take pictures of the room(s) you want to decorate. Upload inspiration images too.', fs: 10.5, lh: 13, tm: 3, bm: 10 },
  { n: '4.', w: 27, mt: 28, np: 10, h: 96, cl: 15, ct: 8, bl: 13, pt: 5, tml: 0, ls: .1,
    title: 'Tell Us How We Can Help!', text: "After we read your info and see your images, we'll need to know how we can help. Then you'll receive a vision board and real time shopping list within a few days.", fs: 9, lh: 10, tm: 3, bm: 7 },
];

export default function App() {
  return (
    <Screen>
      <Global />
      <MenuBar>
        <AppleMark />
        <MenuItems>
          <MenuItem $bold>Sketch</MenuItem>
          {['File', 'Edit', 'Insert', 'Layer', 'Type', 'Arrange', 'Plugins', 'View', 'Window', 'Help'].map(m => <MenuItem key={m}>{m}</MenuItem>)}
        </MenuItems>
        <Status>
          <StatusIcon width="32" height="32" viewBox="0 0 32 32"><rect width="32" height="32" fill="#333" /><path d="M19 6A11 10 0 1 0 19 26V20A6 5 0 1 1 19 12Z" fill="#fff" /><path d="M23 12H26V20H23Z" fill="#fff" /></StatusIcon>
          <StatusIcon $ml={26} width="42" height="36" viewBox="0 0 42 36">
            <path d="M8 28C2 28 1 20 6 18C5 11 13 8 16 12C19 4 31 5 32 14" fill="none" stroke="#111" strokeWidth="3.5" />
            <path d="M12 24C8 18 16 13 20 18L26 30" fill="none" stroke="#111" strokeWidth="3" />
            <circle cx="32" cy="25" r="9" fill="#e2331a" />
          </StatusIcon>
          <StatusIcon $ml={20} width="40" height="34" viewBox="0 0 40 34" fill="none" stroke="#333" strokeWidth="2.8">
            <path d="M2 11C12 1 28 1 38 11M8 17C14 11 26 11 32 17M14 23C17 20 23 20 26 23" /><circle cx="20" cy="29" r="2" fill="#333" />
          </StatusIcon>
          <StatusIcon $ml={25} width="35" height="32" viewBox="0 0 35 32">
            <path d="M8 22H1V1H34V22H27" fill="none" stroke="#333" strokeWidth="2" /><polygon points="17.5,12 30,31 5,31" fill="#333" />
          </StatusIcon>
          <StatusText $ml={22} $fs={25} $ls={-1.6}>92%</StatusText>
          <StatusIcon $ml={11} width="45" height="24" viewBox="0 0 45 24">
            <rect x="1" y="1" width="39" height="22" rx="4" fill="none" stroke="#333" strokeWidth="1.5" /><rect x="4" y="4" width="32" height="16" rx="1.5" fill="#333" /><rect x="42" y="8" width="3" height="8" rx="1" fill="#333" />
          </StatusIcon>
          <StatusText $ml={35} $fs={28}>Fri 11:06 AM</StatusText>
          <StatusIcon $ml={41} width="30" height="32" viewBox="0 0 30 32" fill="none" stroke="#333" strokeWidth="2.4"><circle cx="11" cy="11" r="9.5" /><path d="M18 18L29 31" /></StatusIcon>
          <StatusIcon $ml={42} width="32" height="36" viewBox="0 0 32 36">
            <defs><radialGradient id="siri" cx=".55" cy=".5" r=".6"><stop offset="0" stopColor="#e8c8f0" /><stop offset=".4" stopColor="#7d6fd8" /><stop offset=".75" stopColor="#3d4a9a" /><stop offset="1" stopColor="#151a3c" /></radialGradient></defs>
            <ellipse cx="16" cy="18" rx="15" ry="18" fill="url(#siri)" />
          </StatusIcon>
          <StatusIcon $ml={30} width="36" height="24" viewBox="0 0 36 24" fill="#333">
            <rect x="0" y="1" width="4" height="3" /><rect x="8" y="0" width="28" height="4" /><rect x="0" y="10" width="4" height="3" /><rect x="8" y="9" width="28" height="4" /><rect x="0" y="19" width="4" height="3" /><rect x="8" y="18" width="28" height="4" />
          </StatusIcon>
        </Status>
      </MenuBar>

      <Window>
        <Chrome>
          <TitleBar>
            <Lights>
              <Light $c="#fc5b57" /><Light $c="#fdbc2f" /><Light $c="#33c748" />
            </Lights>
            <DocIcon width="24" height="30" viewBox="0 0 24 30">
              <path d="M1 1H16L23 8V29H1Z" fill="#fff" stroke="#cfcfcf" />
              <polygon points="8,11 16,11 20,15 12,24 4,15" fill="#fdb01e" />
              <polygon points="4,15 20,15 12,24" fill="#f08a10" />
            </DocIcon>
            <DocTitle>Decor Website <DocMuted>— Edited</DocMuted></DocTitle>
            <TitleChevron width="16" height="10" viewBox="0 0 16 10" fill="none" stroke="#9f9da0" strokeWidth="2"><path d="M2 2L8 8L14 2" /></TitleChevron>
          </TitleBar>
          <Tools>
            {tools.map(([k, label, w, ml, on]) => (
              <Tool key={k} $w={w} $ml={ml}>
                <ToolIcon viewBox="-65 0 130 48">{icons[k]}</ToolIcon>
                <ToolLabel $on={on}>{label}</ToolLabel>
              </Tool>
            ))}
          </Tools>
        </Chrome>

        <Body>
          <LeftPane>
            <Pages>
              <PagesHead>Pages
                <PlusIcon width="24" height="24" viewBox="0 0 24 24"><path d="M12 1V23M1 12H23" stroke="#a6a6a6" strokeWidth="3.5" /></PlusIcon>
              </PagesHead>
              {pages.map((p, i) => <PageRow key={p} $sel={i === 1} $alt={i % 2 === 0}>{p}</PageRow>)}
            </Pages>
            <LayersHead>Decor Final Wireframes
              <svg width="26" height="18" viewBox="0 0 26 18"><rect x="1" y="1" width="24" height="16" rx="2" fill="none" stroke="#999" strokeWidth="2" /><rect x="1" y="1" width="24" height="3" fill="#999" /><polygon points="13,6 20,13 6,13" fill="#aaa" /></svg>
            </LayersHead>
            <Layers>
              <LayerCol>
                {layers.map(([ic, name, open], i) => (
                  <LayerRow key={name + i} $alt={i % 2 === 1}>
                    <span />
                    {open
                      ? <svg width="12" height="18" viewBox="0 0 12 18"><polygon points="0,0 12,9 0,18" fill="#a8a8a8" /></svg>
                      : <span />}
                    {LI[ic]}
                    <span>{name}</span>
                  </LayerRow>
                ))}
                <HomeRow>
                  <svg width="24" height="12" viewBox="0 0 24 12"><polygon points="0,0 24,0 12,12" fill="#a8a8a8" /></svg>
                  Home Page
                </HomeRow>
              </LayerCol>
              <ScrollThumb />
            </Layers>
            <FilterBar>
              <FilterBox>
                <svg width="21" height="21" viewBox="0 0 21 21" fill="none" stroke="#666" strokeWidth="1.6"><circle cx="9" cy="9" r="7.5" /><path d="M14 14L20 20" /></svg>
                Filter
              </FilterBox>
              <CountIcon width="24" height="24" viewBox="0 0 24 24" fill="none" stroke="#4f97ee" strokeWidth="2.4"><rect x="1" y="7" width="16" height="15" rx="2" /><path d="M7 6V2H23V16H19" /></CountIcon>
              <PenIcon width="26" height="24" viewBox="0 0 26 24"><path d="M0 23C7 20 13 13 25 1C24 10 17 22 0 23Z" fill="#4f97ee" /></PenIcon>
              <Count>0</Count>
            </FilterBar>
          </LeftPane>

          <Corner />
          <HRuler>
            <HSpacer />
            {hLabels.map(l => <HCell key={l}>{l}</HCell>)}
          </HRuler>
          <AlignBar>
            {aligns.map(([ml, g], i) => <AlignIcon key={i} $ml={ml} viewBox="0 0 40 40">{g}</AlignIcon>)}
            <AlignDivider />
          </AlignBar>

          <VRuler>
            <VCell $h={12}><VLabel>-200</VLabel></VCell>
            {vLabels.map(l => <VCell key={l} $h={117.3}><VLabel>{l}</VLabel></VCell>)}
          </VRuler>

          <Canvas>
            <ArtLabel>Home Page</ArtLabel>
            <Artboard>
              <Hero>
                <HeroX viewBox="0 0 600 257"><path d="M0 0L600 257M3 257L600 0" stroke="#b4b4b4" strokeWidth="1" /><path d="M0 9L12 9L1 19L12 28L0 28" fill="none" stroke="#b4b4b4" /></HeroX>
                <HeroIn>
                  <Nav>
                    <Brand>NAME</Brand>
                    <NavLink>REFER A FRIEND</NavLink><NavLink>DASHBOARD</NavLink><NavLink>ACCOUNT</NavLink><NavLink>GALLERY</NavLink>
                  </Nav>
                  <HeroMid>
                    <Decor>D<DecorRest>ecor</DecorRest></Decor>
                    <Made>MADE</Made>
                    <Words>SIMPLE<br />EASY<br />FUNCTIONAL</Words>
                  </HeroMid>
                  <Started>LETS GET STARTED</Started>
                </HeroIn>
              </Hero>

              <How>
                <HowTitle>HOW IT WORKS</HowTitle>
                <StepGrid>
                  {stepData.map(s => (
                    <Step key={s.n}>
                      <StepTop>
                        <StepNum $w={s.num.w} $pt={s.num.pt} $ml={s.num.ml}>{s.n}</StepNum>
                        <StepBox />
                        {s.gap && (
                          <StepArrow $ml={s.gap} width={s.aw} height="24" viewBox={`0 0 ${s.aw} 24`} fill="none" stroke="#c4c4c4" strokeWidth="1">
                            <path d={`M0 12H${s.aw - 1}M${s.aw - 10} 2L${s.aw - 1} 12L${s.aw - 10} 22`} />
                          </StepArrow>
                        )}
                      </StepTop>
                      <StepLabel>{s.label}</StepLabel>
                    </Step>
                  ))}
                </StepGrid>
              </How>

              <Steps>
                {cards.map(c => (
                  <CardRow key={c.n} $mt={c.mt}>
                    <CardNum $w={c.w} $pt={c.np}>{c.n}</CardNum>
                    <Card $h={c.h}>
                      <Circle $left={c.cl} $top={c.ct} />
                      <CardBody $left={c.bl} $pt={c.pt}>
                        <CardTitle $ml={c.tml}>{c.title}</CardTitle>
                        <CardText $mt={c.tm} $fs={c.fs} $lh={c.lh} $ls={c.ls}>{c.text}</CardText>
                        <CardBtns $mt={c.bm}><CardBtn $low>GO NOW</CardBtn><CardBtn>LATER</CardBtn></CardBtns>
                      </CardBody>
                    </Card>
                  </CardRow>
                ))}
              </Steps>

              <Press>
                <Quote>
                  <LogoSlot $ml={52}><Elle>ELLE</Elle><ElleDecor>DECOR</ElleDecor></LogoSlot>
                  <QuoteText $mt={3} $w={183} $lh={10.5}>“Nunc aliquam metus ac mi egestas mattis. Aliquam interdum tellus non elementum eleifend.”</QuoteText>
                </Quote>
                <Quote>
                  <LogoSlot $ml={15}><WaPo>The Washington Post</WaPo></LogoSlot>
                  <QuoteText $mt={6} $w={151} $lh={10.5}>“Nunc aliquam metus ac mi egestas mattis.”</QuoteText>
                </Quote>
                <Quote>
                  <LogoSlot $ml={46}>
                    <HgtvWrap>
                      <svg width="24" height="10" viewBox="0 0 24 10"><polygon points="12,0 24,9 20,10 4,10 0,9" fill="#111" /></svg>
                      <Hgtv>HGTV</Hgtv>
                    </HgtvWrap>
                  </LogoSlot>
                  <QuoteText $mt={1.5} $w={125} $lh={11}>“Nunc aliquam metus ac mi egestas mattis.”</QuoteText>
                </Quote>
              </Press>

              <Footer>
                <div>
                  <Follow>
                    <FollowText>FOLLOW US<br />WE'RE FRIENDLY!</FollowText>
                    <Socials>
                      <FaFacebookF size={11} /><SocialSep /><FaTwitter size={15} /><SocialSep />
                      <svg width="14" height="14" viewBox="0 0 14 14"><rect width="14" height="14" rx="3" fill="#efefef" /><path d="M0 5H14" stroke="#7f7e7c" strokeWidth="1" /><circle cx="7" cy="7" r="3" fill="#efefef" stroke="#7f7e7c" strokeWidth="1" /><rect x="10" y="1.5" width="2.5" height="2.5" fill="#7f7e7c" /></svg>
                    </Socials>
                  </Follow>
                  <LinkCols>
                    <div>
                      <ColHead>COMPANY</ColHead>
                      <LinkList $mt={6}>
                        <span>About Us</span><span>Contact Us</span><span>Careers</span><span>Press</span><span>Blog</span><span>Terms &amp; Privacy</span>
                      </LinkList>
                    </div>
                    <div>
                      <ColHead>DISCOVER</ColHead>
                      <LinkList $mt={8}>
                        <span>How NAME Works</span><span>Buy a Gift Card</span><span>Refer a Friend</span><span>Help</span>
                      </LinkList>
                    </div>
                  </LinkCols>
                </div>
                <AppCol>
                  <AppHead>DOWNLOAD OUR APP</AppHead>
                  <AppText>Decorate wherever you are with our mobile app.</AppText>
                  <Badges>
                    <Badge $w={77}>
                      <AppleBadge />
                      <BadgeText>Download on the<BadgeBig>App Store</BadgeBig></BadgeText>
                    </Badge>
                    <Badge $w={75}>
                      <svg width="13" height="14" viewBox="0 0 13 14"><polygon points="0,0 7,7 0,14" fill="#3bccff" /><polygon points="0,0 10,5 7,7" fill="#48d07a" /><polygon points="0,14 10,9 7,7" fill="#f0483e" /><polygon points="10,5 13,7 10,9 7,7" fill="#fdc72e" /></svg>
                      <BadgeText>GET IT ON<BadgeBig>Google play</BadgeBig></BadgeText>
                    </Badge>
                  </Badges>
                </AppCol>
              </Footer>
            </Artboard>
          </Canvas>

          <Inspector>
            <FormBlock>
              <FormRow>
                <RowLabel>Position</RowLabel>
                <Field><InputBox />X</Field><span /><Field><InputBox />Y</Field>
              </FormRow>
              <FormRow>
                <RowLabel>Size</RowLabel>
                <Field><InputBox $soft />Width</Field>
                <LockCell><svg width="14" height="20" viewBox="0 0 14 20" fill="none"><path d="M3 9V5A4 4 0 0 1 11 4" stroke="#999" strokeWidth="2" /><rect x="1" y="9" width="12" height="10" fill="#999" /></svg></LockCell>
                <Field><InputBox $soft />Height</Field>
              </FormRow>
              <FormRow>
                <RowLabel>Transform</RowLabel>
                <Field><InputBox />Rotate</Field><span />
                <Field>
                  <Flip>
                    <FlipSide>
                      <svg width="30" height="20" viewBox="0 0 30 20"><polygon points="13,1 13,19 2,19" fill="#dcdcdc" /><polygon points="17,1 17,19 28,19" fill="#b4b4b4" /></svg>
                    </FlipSide>
                    <FlipSide $div>
                      <svg width="30" height="20" viewBox="0 0 30 20"><polygon points="2,1 28,8 2,8" fill="#dcdcdc" /><polygon points="2,19 28,12 2,12" fill="#b4b4b4" /></svg>
                    </FlipSide>
                  </Flip>
                  Flip
                </Field>
              </FormRow>
            </FormBlock>
            <BlendBlock>
              <BlendRow $mb={18}>
                <BlendLabel>Opacity</BlendLabel>
                <Slider><Thumb /></Slider>
                <InputBox $w={84} $soft />
              </BlendRow>
              <BlendRow>
                <BlendLabel>Blending</BlendLabel>
                <Select>Normal<Chevrons /></Select>
              </BlendRow>
            </BlendBlock>
            <SectionRow>Fills</SectionRow>
            <SectionRow>Borders</SectionRow>
            <SectionRow>Shadows</SectionRow>
            <SectionRow>Inner Shadows</SectionRow>
            <SectionRow>Gaussian Blur
              <SmallChevrons width="18" height="26" viewBox="0 0 22 26" fill="none" stroke="#666" strokeWidth="2.4"><path d="M4 9L11 3L18 9M4 17L11 23L18 17" /></SmallChevrons>
              <Check />
            </SectionRow>
          </Inspector>
        </Body>
      </Window>

      <Strip>
        <StripArt width="200" height="8" viewBox="0 0 200 8" fill="none" stroke="#333" strokeWidth="4">
          <path d="M37 -2L27 10M172 -2L182 10" />
        </StripArt>
      </Strip>
    </Screen>
  );
}
